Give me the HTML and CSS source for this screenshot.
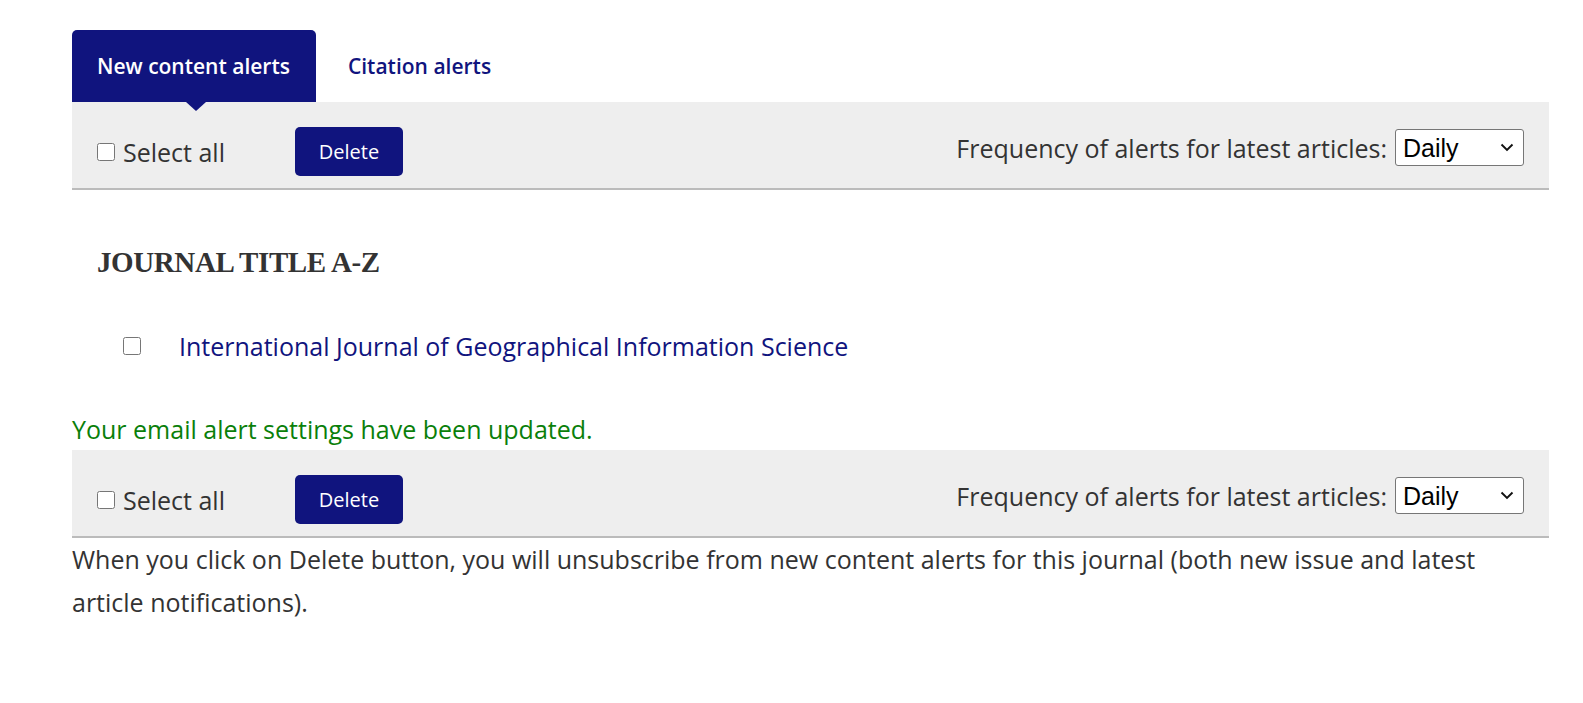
FILE: index.html
```html
<!DOCTYPE html>
<html lang="en">
<head>
<meta charset="utf-8">
<title>Alerts</title>
<link rel="stylesheet" href="styles.css">
</head>
<body>
<div class="page">
  <div class="tabs">
    <div class="tab active">New content alerts</div>
    <div class="tab">Citation alerts</div>
  </div>
  <div class="toolbar">
    <div class="tool-left">
      <label class="selall"><input type="checkbox" class="cb"> Select all</label>
      <button class="btn">Delete</button>
    </div>
    <div class="tool-right">
      <span>Frequency of alerts for latest articles:</span>
      <span class="selwrap">
        <select class="freq"><option>Daily</option><option>Weekly</option></select>
        <svg class="chev" width="14" height="9" viewBox="0 0 14 9"><path d="M1.5 1.5 L7 7 L12.5 1.5" fill="none" stroke="#111" stroke-width="1.9"/></svg>
      </span>
    </div>
  </div>
  <h2 class="heading">JOURNAL TITLE A-Z</h2>
  <div class="journal">
    <input type="checkbox" class="cb">
    <a class="jlink" href="#">International Journal of Geographical Information Science</a>
  </div>
  <p class="msg">Your email alert settings have been updated.</p>
  <div class="toolbar">
    <div class="tool-left">
      <label class="selall"><input type="checkbox" class="cb"> Select all</label>
      <button class="btn">Delete</button>
    </div>
    <div class="tool-right">
      <span>Frequency of alerts for latest articles:</span>
      <span class="selwrap">
        <select class="freq"><option>Daily</option><option>Weekly</option></select>
        <svg class="chev" width="14" height="9" viewBox="0 0 14 9"><path d="M1.5 1.5 L7 7 L12.5 1.5" fill="none" stroke="#111" stroke-width="1.9"/></svg>
      </span>
    </div>
  </div>
  <p class="note">When you click on Delete button, you will unsubscribe from new content alerts for this journal (both new issue and latest article notifications).</p>
</div>
</body>
</html>
```
FILE: styles.css
```css
html, body { margin: 0; padding: 0; background: #fff; }
body { font-family: "Open Sans", "Noto Sans", sans-serif; color: #333; }
.page { margin: 0 34px 0 72px; padding-top: 30px; }
.tabs { display: flex; height: 72px; }
.tab {
  display: flex; align-items: center; padding: 0 25px 0 32px;
  font-size: 21px; font-weight: 600; color: #10147e; position: relative;
}
.tab.active {
  background: #10147e; color: #fff; border-radius: 5px 5px 0 0; padding: 0 26px 0 25px;
}
.tab.active::after {
  content: ""; position: absolute; left: 50%; margin-left: -8px; bottom: -9px;
  border-left: 10px solid transparent; border-right: 10px solid transparent;
  border-top: 9px solid #10147e;
}
.toolbar {
  background: #eee; box-sizing: content-box; border-bottom: 2px solid #bbb;
  display: flex; align-items: center; justify-content: space-between;
  padding: 12px 25px 0 25px; height: 74px;
}
.tool-left { display: flex; align-items: center; gap: 70px; }
.selall { display: flex; align-items: center; font-size: 25px; gap: 8px; padding-top: 2px; }
.cb { width: 18px; height: 18px; margin: 0; }
.btn {
  background: #10147e; color: #fff; border: none; border-radius: 5px;
  width: 108px; height: 49px; font-family: "Open Sans", sans-serif; font-size: 20px;
  padding: 0;
}
.tool-right { display: flex; align-items: center; gap: 8px; font-size: 25px; padding-bottom: 7px; }
.selwrap { position: relative; display: inline-flex; }
.freq {
  -webkit-appearance: none; appearance: none;
  width: 129px; height: 37px; padding: 0 0 0 7px; font-family: "Liberation Sans", Arial, sans-serif;
  font-size: 25px; color: #000; background: #fff; border: 1px solid #767676; border-radius: 3px;
}
.chev { position: absolute; right: 10px; top: 14px; pointer-events: none; }
.heading {
  font-family: "Liberation Serif", "DejaVu Serif", serif; font-weight: bold;
  font-size: 29px; letter-spacing: -0.4px; line-height: 34px; margin: 55px 0 0 25px; color: #333;
}
.journal { display: flex; align-items: center; margin: 50px 0 0 51px; gap: 38px; height: 34px; }
.jlink { font-size: 25px; line-height: 34px; color: #10147e; text-decoration: none; }
.msg { color: #0a7f0a; font-size: 25px; margin: 49px 0 4px 0; line-height: 34px; }
.note { font-size: 25px; line-height: 43px; margin: 0; color: #333; }
```
